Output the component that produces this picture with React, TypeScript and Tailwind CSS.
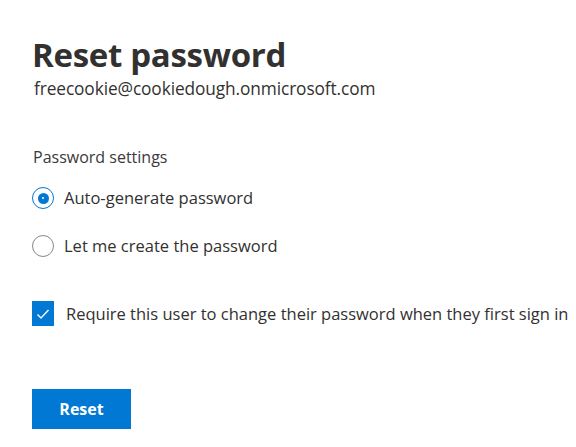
import React from 'react';

export default function App() {
  return (
    <div
      className="w-[576px] h-[447px] bg-white text-[#323130] overflow-hidden"
      style={{ fontFamily: '"Open Sans", "Noto Sans", sans-serif' }}
    >
      <div className="pl-[32px] pt-[35px] flex flex-col">
        <h1 className="text-[33px] leading-[40px] font-bold tracking-[-0.3px]">Reset password</h1>
        <div className="text-[17.3px] leading-[22px] ml-[2px] mt-[3px] tracking-[-0.1px]">
          freecookie@cookiedough.onmicrosoft.com
        </div>

        <div className="mt-[46px] text-[16px] leading-[22px] text-[#3b3a39] ml-[1px]">Password settings</div>

        {/* Radio group */}
        <div className="flex flex-col gap-[26px] mt-[19px]">
          <label className="flex items-center gap-[10px]">
            <span className="w-[22px] h-[22px] rounded-full border-[1.5px] border-[#0078d4] flex items-center justify-center">
              <span className="w-[11px] h-[11px] rounded-full bg-[#0078d4] flex items-center justify-center">
                <span className="w-[2px] h-[2px] rounded-full bg-white" />
              </span>
            </span>
            <span className="text-[16.5px] leading-[22px]">Auto-generate password</span>
          </label>
          <label className="flex items-center gap-[10px]">
            <span className="w-[22px] h-[22px] rounded-full border-[1.5px] border-[#8a8886]" />
            <span className="text-[16.5px] leading-[22px]">Let me create the password</span>
          </label>
        </div>

        {/* Checkbox */}
        <label className="flex items-center gap-[12px] mt-[44px]">
          <span className="w-[22px] h-[25px] bg-[#0078d4] flex items-center justify-center">
            <svg width="14" height="14" viewBox="0 0 14 14" fill="none">
              <path d="M1.5 7.5 L5 11 L12.5 3" stroke="white" strokeWidth="1.4" />
            </svg>
          </span>
          <span className="text-[16.5px] leading-[22px] whitespace-nowrap">
            Require this user to change their password when they first sign in
          </span>
        </label>

        <button className="mt-[63px] w-[99px] h-[40px] bg-[#0078d4] text-white text-[16px] font-bold">
          Reset
        </button>
      </div>
    </div>
  );
}
